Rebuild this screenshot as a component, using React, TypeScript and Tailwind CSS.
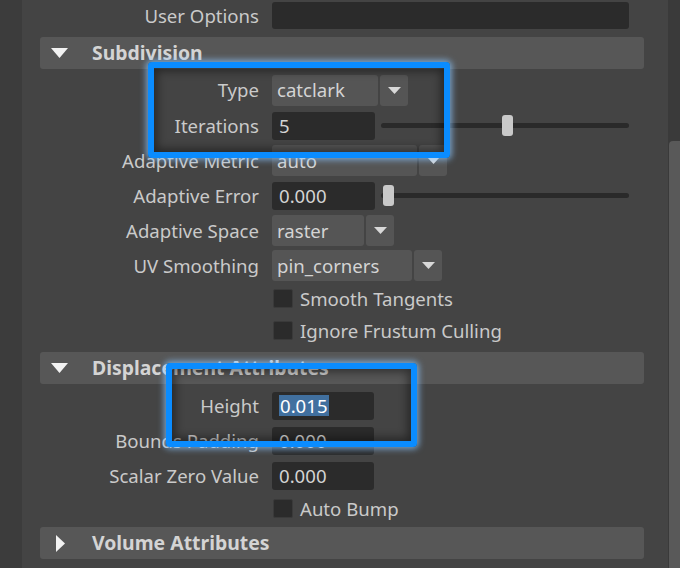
import React from 'react';

const font = { fontFamily: '"Noto Sans", "Open Sans", sans-serif' };

const DownTri = ({ className }: { className?: string }) => (
  <svg width="17" height="10" viewBox="0 0 17 10" className={className}>
    <polygon points="0,0 17,0 8.5,10" fill="#f2f2f2" />
  </svg>
);

const RightTri = () => (
  <svg width="9" height="17" viewBox="0 0 9 17">
    <polygon points="0,0 9,8.5 0,17" fill="#f2f2f2" />
  </svg>
);

const SmallArrow = () => (
  <svg width="13" height="7" viewBox="0 0 13 7">
    <polygon points="0,0 13,0 6.5,7" fill="#d8d8d8" />
  </svg>
);

interface RowProps {
  label?: string;
  height: string;
  children?: React.ReactNode;
}

const Row: React.FC<RowProps> = ({ label, height, children }) => (
  <div className={`flex items-center ${height}`}>
    <div className="w-[237px] text-right text-[18.6px] text-[#cacaca] whitespace-nowrap">
      {label}
    </div>
    <div className="ml-[13px] flex items-center">{children}</div>
  </div>
);

const Header = ({ title, open }: { title: string; open: boolean }) => (
  <div className="ml-[18px] flex h-[32px] w-[604px] items-center rounded-[3px] bg-[#575757]">
    <div className="flex w-[52px] items-center pl-[11px]">
      {open ? <DownTri /> : <div className="pl-[5px]"><RightTri /></div>}
    </div>
    <span className="text-[19.4px] font-bold text-[#d4d4d4]">{title}</span>
  </div>
);

const Field = ({ value, width, selected }: { value: string; width: string; selected?: boolean }) => (
  <div className={`flex h-[28px] items-center rounded-[3px] bg-[#2b2b2b] pl-[7px] text-[18.6px] text-[#d4d4d4] ${width}`}>
    {selected ? (
      <span className="bg-[#41709f] px-[1px] leading-[21px] text-white">{value}</span>
    ) : (
      value
    )}
  </div>
);

const Dropdown = ({ value, width }: { value: string; width: string }) => (
  <div className="flex h-[31px] items-center gap-[2px]">
    <div className={`flex h-full items-center rounded-[3px] bg-[#555555] pl-[5px] text-[18.6px] text-[#d4d4d4] ${width}`}>
      {value}
    </div>
    <div className="flex h-full w-[28px] items-center justify-center rounded-[3px] bg-[#555555]">
      <SmallArrow />
    </div>
  </div>
);

const Slider = ({ pos }: { pos: string }) => (
  <div className="ml-[6px] flex h-[21px] w-[248px] items-center">
    <div className="relative h-[5px] w-full rounded-full bg-[#2a2a2a]">
      <div className={`absolute top-[-8px] h-[21px] w-[11px] rounded-[3px] bg-[#c9c9c9] ${pos}`} />
    </div>
  </div>
);

const Check = ({ label }: { label: string }) => (
  <div className="flex items-center">
    <div className="ml-[1px] h-[19px] w-[20px] rounded-[2px] border border-[#3a3a3a] bg-[#2b2b2b]" />
    <span className="ml-[7px] text-[18.6px] text-[#cacaca]">{label}</span>
  </div>
);

export default function App() {
  return (
    <div className="relative flex h-[568px] w-[680px] overflow-hidden bg-[#444444]" style={font}>
      <div className="w-[22px] shrink-0 bg-[#3c3c3c]" />

      <div className="flex w-[646px] flex-col">
        <Row label="User Options" height="h-[31px]">
          <div className="h-[27px] w-[357px] rounded-[3px] bg-[#2b2b2b]" />
        </Row>
        <div className="h-[6px]" />
        <Header title="Subdivision" open />
        <div className="h-[3px]" />
        <Row label="Type" height="h-[36px]">
          <Dropdown value="catclark" width="w-[106px]" />
        </Row>
        <Row label="Iterations" height="h-[35px]">
          <Field value="5" width="w-[103px]" />
          <Slider pos="left-[121px]" />
        </Row>
        <Row label="Adaptive Metric" height="h-[35px]">
          <Dropdown value="auto" width="w-[145px]" />
        </Row>
        <Row label="Adaptive Error" height="h-[35px]">
          <Field value="0.000" width="w-[103px]" />
          <Slider pos="left-[2px]" />
        </Row>
        <Row label="Adaptive Space" height="h-[35px]">
          <Dropdown value="raster" width="w-[92px]" />
        </Row>
        <Row label="UV Smoothing" height="h-[35px]">
          <Dropdown value="pin_corners" width="w-[140px]" />
        </Row>
        <Row height="h-[32px]">
          <Check label="Smooth Tangents" />
        </Row>
        <Row height="h-[32px]">
          <Check label="Ignore Frustum Culling" />
        </Row>
        <div className="h-[5px]" />
        <Header title="Displacement Attributes" open />
        <div className="h-[4px]" />
        <Row label="Height" height="h-[35px]">
          <Field value="0.015" width="w-[102px]" selected />
        </Row>
        <Row label="Bounds Padding" height="h-[35px]">
          <Field value="0.000" width="w-[102px]" />
        </Row>
        <Row label="Scalar Zero Value" height="h-[35px]">
          <Field value="0.000" width="w-[102px]" />
        </Row>
        <Row height="h-[32px]">
          <Check label="Auto Bump" />
        </Row>
        <div className="h-[2px]" />
        <Header title="Volume Attributes" open={false} />
      </div>

      <div className="flex w-[12px] shrink-0 flex-col bg-[#3a3a3a]">
        <div className="ml-[1px] mt-[141px] flex-1 rounded-tl-[4px] bg-[#595959]" />
      </div>

      {/* highlight boxes */}
      <div className="absolute left-[148px] top-[62px] h-[96px] w-[302px] rounded-[4px] border-[6px] border-[#0a8cff] shadow-[0_0_6px_2px_rgba(140,200,255,0.7),inset_0_0_10px_3px_rgba(0,0,0,0.45)]" />
      <div className="absolute left-[166px] top-[363px] h-[84px] w-[251px] rounded-[4px] border-[6px] border-[#0a8cff] shadow-[0_0_6px_2px_rgba(140,200,255,0.7),inset_0_0_10px_3px_rgba(0,0,0,0.45)]" />
    </div>
  );
}
